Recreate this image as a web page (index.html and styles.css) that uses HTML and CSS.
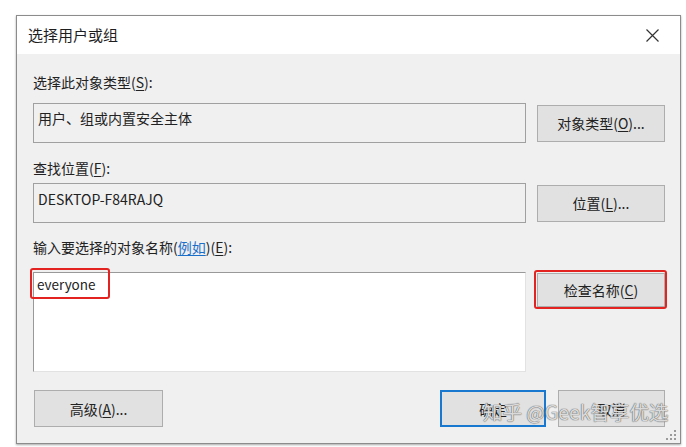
FILE: index.html
```html
<!DOCTYPE html>
<html lang="zh-CN">
<head>
<meta charset="utf-8">
<title>选择用户或组</title>
<link rel="stylesheet" href="styles.css">
</head>
<body>
<div class="dialog">
  <div class="titlebar">
    <span class="title">选择用户或组</span>
    <svg class="close" width="13" height="13" viewBox="0 0 13 13"><path d="M0.5 0.5 L12.5 12.5 M12.5 0.5 L0.5 12.5" stroke="#333" stroke-width="1.2" fill="none"/></svg>
  </div>
  <div class="content">
    <div class="grid">
      <div class="label">选择此对象类型(<u>S</u>):</div>
      <div></div>
      <div class="field">用户、组或内置安全主体</div>
      <div class="btn side">对象类型(<u>O</u>)...</div>

      <div class="label l2">查找位置(<u>F</u>):</div>
      <div></div>
      <div class="field field2">DESKTOP-F84RAJQ</div>
      <div class="btn side">位置(<u>L</u>)...</div>

      <div class="label l3">输入要选择的对象名称(<a class="link">例如</a>)(<u>E</u>):</div>
      <div></div>
      <div class="area"><span class="typed">everyone</span><span class="mark mark-text"></span></div>
      <div class="checkcell"><div class="btn check">检查名称(<u>C</u>)</div><span class="mark mark-btn"></span></div>
    </div>
    <div class="footer">
      <div class="btn adv">高级(<u>A</u>)...</div>
      <div class="spacer"></div>
      <div class="btn ok">确定</div>
      <div class="btn cancel">取消</div>
    </div>
    <div class="watermark">知乎 @Geek智享优选</div>
    <svg class="grip" width="10" height="10" viewBox="0 0 10 10"><g fill="#9a9a9a"><rect x="8" y="0" width="2" height="2"/><rect x="4" y="4" width="2" height="2"/><rect x="8" y="4" width="2" height="2"/><rect x="0" y="8" width="2" height="2"/><rect x="4" y="8" width="2" height="2"/><rect x="8" y="8" width="2" height="2"/></g></svg>
  </div>
</div>
</body>
</html>
```

FILE: styles.css
```css
* { box-sizing: border-box; }
html, body { margin: 0; padding: 0; }
body {
  width: 686px;
  height: 447px;
  overflow: hidden;
  background: #ffffff;
  font-family: "Noto Sans CJK SC", "Microsoft YaHei", sans-serif;
  color: #222;
  font-size: 14px;
}
u { text-decoration: underline; text-underline-offset: 2px; }
.dialog {
  margin: 15px 0 0 16px;
  width: 665px;
  height: 429px;
  border: 1px solid #8c8c8c;
  box-shadow: 0 1px 2px rgba(0,0,0,0.35);
  display: flex;
  flex-direction: column;
  background: #f0f0f0;
}
.titlebar {
  height: 38px;
  background: #fff;
  display: flex;
  align-items: center;
  justify-content: space-between;
  padding: 0 21px 0 11px;
  flex: none;
}
.title { font-size: 15px; line-height: 20px; color: #1e1e1e; }
.close { display: block; }
.content {
  position: relative;
  flex: 1;
  padding: 18px 15px 0 16px;
}
.grid {
  display: grid;
  grid-template-columns: 493px 128px;
  column-gap: 11px;
}
.label { height: 20px; line-height: 20px; margin-bottom: 11px; }
.l2 { margin-top: 15px; margin-bottom: 5px; }
.l3 { margin-top: 14px; margin-bottom: 15px; }
.link { color: #1a6fc9; text-decoration: underline; text-underline-offset: 2px; }
.field {
  height: 40px;
  border: 1px solid #a0a0a0;
  background: #f0f0f0;
  padding: 4px 0 0 4px;
  line-height: 20px;
}
.field2 { padding-top: 5px; }
.btn {
  height: 37px;
  border: 1px solid #adadad;
  background: #e1e1e1;
  display: flex;
  align-items: center;
  justify-content: center;
  line-height: 20px;
  color: #222;
}
.side { align-self: center; }
.area {
  position: relative;
  height: 100px;
  border: 1px solid #999;
  border-right-color: #e2e2e2;
  border-bottom-color: #e2e2e2;
  background: #fff;
  padding: 1px 0 0 3px;
  line-height: 20px;
  font-size: 13.5px;
}
.checkcell { position: relative; padding-top: 1px; }
.check { height: 34px; }
.mark {
  position: absolute;
  border: 2px solid #e2231f;
  border-radius: 3px;
}
.mark-text { left: -4px; top: -5px; width: 80px; height: 31px; }
.mark-btn { left: -3px; top: -2px; width: 133px; height: 39px; }
.footer {
  display: flex;
  margin-top: 18px;
  padding-left: 1px;
}
.adv { width: 129px; }
.spacer { flex: 1; }
.ok { width: 106px; border: 2px solid #1878d0; }
.cancel { width: 107px; margin-left: 12px; }
.watermark {
  position: absolute;
  left: 466px;
  top: 344px;
  font-size: 19.5px;
  line-height: 28px;
  color: rgba(255,255,255,0.8);
  text-shadow: 0 0 1px #555, 0 0 1px #555;
  white-space: nowrap;
}
.grip { position: absolute; right: 4px; bottom: 3px; }
```
